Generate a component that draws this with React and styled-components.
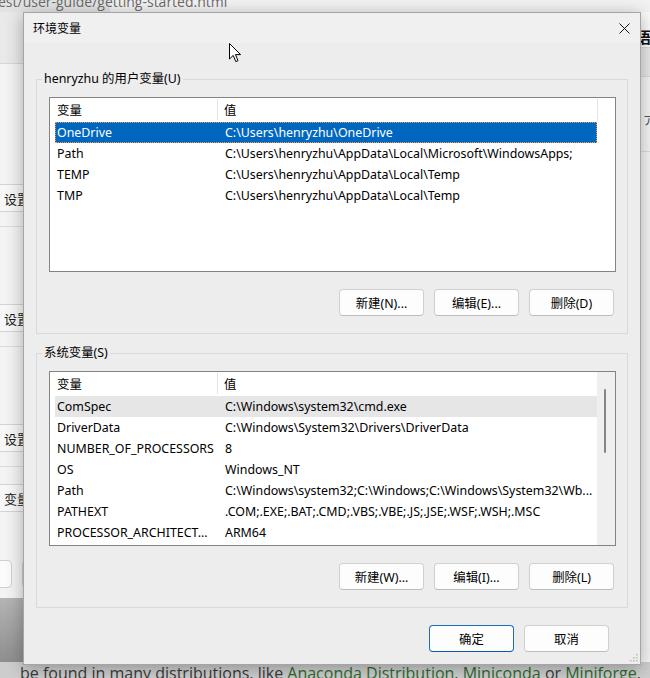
import React from 'react';
import styled, { createGlobalStyle } from 'styled-components';

const GlobalStyle = createGlobalStyle`
  html, body {
    margin: 0;
    padding: 0;
  }
  body {
    width: 650px;
    height: 678px;
    overflow: hidden;
    background: #f3f3f3;
    font-family: "Noto Sans", "Noto Sans CJK SC", sans-serif;
  }
`;

const Desktop = styled.div`
  position: relative;
  width: 650px;
  height: 678px;
  overflow: hidden;
`;

/* ---------- background windows ---------- */

const BrowserPage = styled.div`
  position: absolute;
  inset: 0;
  display: flex;
  flex-direction: column;
  background: #f4f4f4;
`;

const UrlStrip = styled.div`
  height: 12px;
  overflow: hidden;
  background: linear-gradient(to right, #e3e3e3 110px, #f2f2f2 110px);
  font-family: "Open Sans", sans-serif;
  font-size: 14px;
  line-height: 14px;
  color: #6a6a6a;
  white-space: nowrap;
`;

const UrlText = styled.div`
  margin-top: -5px;
  margin-left: -2px;
`;

const PageBody = styled.div`
  flex: 1;
`;

const PageFooter = styled.div`
  height: 16px;
  overflow: hidden;
  padding-left: 20px;
  background: #cdcdcd;
  font-family: "Open Sans", sans-serif;
  font-size: 16px;
  line-height: 22px;
  color: #3a3a3a;
  white-space: nowrap;
`;

const PageLink = styled.span`
  color: #2d6b2d;
`;

const SettingsWindow = styled.div`
  position: absolute;
  left: 0;
  top: 12px;
  width: 110px;
  height: 586px;
  background: #f3f3f3;
  display: flex;
  flex-direction: column;
  font-size: 13px;
  color: #1a1a1a;
`;

const SettingsTop = styled.div`
  height: 51px;
  flex: none;
  background: #e9e9e9;
  border-bottom: 1px solid #d6d6d6;
`;

const SettingsCard = styled.div`
  flex: none;
  height: 26px;
  margin-top: ${(p) => p.$gap}px;
  display: flex;
  align-items: center;
  padding-left: 4px;
  background: #f7f7f7;
  border-top: 1px solid #d4d4d4;
  border-bottom: 1px solid #d4d4d4;
`;

const SettingsRule = styled.div`
  flex: none;
  height: 0;
  margin-top: 14px;
  border-top: 1px solid #dcdcdc;
`;

const SettingsButtons = styled.div`
  flex: none;
  margin-top: ${(p) => p.$gap}px;
  display: flex;
  gap: 10px;
  margin-left: -60px;
`;

const SettingsButton = styled.div`
  width: 70px;
  height: 26px;
  border: 1px solid #cfcfcf;
  border-radius: 4px;
  background: #fbfbfb;
`;

const ShadowZone = styled.div`
  position: absolute;
  left: 0;
  top: 598px;
  width: 30px;
  height: 64px;
  background: linear-gradient(to bottom, #b4b4b4, #8e8e8e);
`;

const RightPane = styled.div`
  position: absolute;
  left: 630px;
  top: 12px;
  width: 40px;
  height: 640px;
  display: flex;
  flex-direction: column;
  background: #f4f4f4;
`;

const RightHead = styled.div`
  height: 35px;
  flex: none;
  background: #fafafa;
  border-bottom: 1px solid #d8d8d8;
  font-size: 15px;
  font-weight: 700;
  line-height: 50px;
  padding-left: 6px;
  color: #111;
  overflow: hidden;
`;

const RightBand = styled.div`
  height: 28px;
  flex: none;
  background: #e7e7e7;
  border-bottom: 1px solid #dadada;
`;

const RightRow = styled.div`
  height: 75px;
  flex: none;
  border-bottom: 1px solid #dcdcdc;
  font-size: 12px;
  color: #555;
  padding: 34px 0 0 13px;
  box-sizing: border-box;
`;

/* ---------- dialog ---------- */

const Dialog = styled.div`
  position: absolute;
  left: 23px;
  top: 12px;
  width: 618px;
  height: 653px;
  box-sizing: border-box;
  border: 1px solid #a5a5a5;
  background: #ededed;
  box-shadow: 0 3px 16px rgba(0, 0, 0, 0.3);
  display: flex;
  flex-direction: column;
  font-size: 12px;
  color: #000;
`;

const TitleBar = styled.div`
  height: 30px;
  flex: none;
  display: flex;
  align-items: center;
  justify-content: space-between;
  padding: 0 10px 0 9px;
  background: #f0f0f0;
`;

const DialogBody = styled.div`
  flex: 1;
  display: flex;
  flex-direction: column;
  padding: 28px 12px 0 12px;
`;

const Group = styled.fieldset`
  margin: ${(p) => (p.$first ? '0' : '11px 0 0 0')};
  padding: 0;
  min-width: 0;
  border: 1px solid #d9d9d9;
`;

const Legend = styled.legend`
  margin-left: 5px;
  padding: 0 2px;
  font-size: 12.4px;
  line-height: 16px;
`;

const GroupInner = styled.div`
  padding: 10px 11px 17px 12px;
`;

const ListBox = styled.div`
  height: 175px;
  box-sizing: border-box;
  border: 1px solid #838383;
  background: #fff;
  display: flex;
  font-size: 12.4px;
`;

const ListMain = styled.div`
  flex: 1;
  min-width: 0;
`;

const HeaderRow = styled.div`
  height: 24px;
  display: grid;
  grid-template-columns: 168px 1fr;
`;

const HeadCell = styled.div`
  display: flex;
  align-items: center;
  padding-left: ${(p) => (p.$first ? 7 : 6)}px;
  margin: 1px 0 2px;
  border-right: ${(p) => (p.$first ? '1px solid #e3e3e3' : 'none')};
`;

const Row = styled.div`
  height: 21px;
  margin-left: 5px;
  box-sizing: border-box;
  display: grid;
  grid-template-columns: 163px 1fr;
  align-items: center;
  white-space: nowrap;
  background: ${(p) => (p.$selected ? '#0067c0' : p.$hover ? '#e6e6e6' : 'transparent')};
  color: ${(p) => (p.$selected ? '#fff' : '#000')};
  outline: ${(p) => (p.$selected ? '1px dotted #f0a04a' : 'none')};
  outline-offset: -1px;
`;

const Cell = styled.div`
  padding-left: ${(p) => (p.$first ? 2 : 7)}px;
  overflow: hidden;
`;

const SideCol = styled.div`
  width: 18px;
  flex: none;
  box-sizing: border-box;
  background: ${(p) => (p.$scroll ? '#efefef' : '#fff')};
  padding: ${(p) => (p.$scroll ? '17px 0 0 7px' : '0')};
`;

const SideHead = styled.div`
  height: 22px;
  margin-top: 1px;
  border-left: 1px solid #e3e3e3;
`;

const Thumb = styled.div`
  width: 2px;
  height: 64px;
  border-radius: 1px;
  background: #858585;
`;

const ButtonRow = styled.div`
  display: flex;
  justify-content: flex-end;
  gap: 10px;
  margin-top: 17px;
  padding-right: ${(p) => p.$right || 2}px;
`;

const Button = styled.button`
  width: 85px;
  height: 27px;
  box-sizing: border-box;
  border: 1px solid ${(p) => (p.$primary ? '#1a6dc0' : '#d0d0d0')};
  border-bottom-color: ${(p) => (p.$primary ? '#0a5aa8' : '#bdbdbd')};
  border-radius: 4px;
  background: #fdfdfd;
  font-family: "Noto Sans", "Noto Sans CJK SC", sans-serif;
  font-size: 12.4px;
  color: #000;
  padding: 0;
`;

const FooterRow = styled(ButtonRow)`
  margin-top: 17px;
`;

const Grip = styled.svg`
  position: absolute;
  right: 2px;
  bottom: 2px;
`;

const Cursor = styled.svg`
  position: absolute;
  left: 229px;
  top: 43px;
`;

const userVars = [
  ['OneDrive', 'C:\\Users\\henryzhu\\OneDrive'],
  ['Path', 'C:\\Users\\henryzhu\\AppData\\Local\\Microsoft\\WindowsApps;'],
  ['TEMP', 'C:\\Users\\henryzhu\\AppData\\Local\\Temp'],
  ['TMP', 'C:\\Users\\henryzhu\\AppData\\Local\\Temp'],
];

const systemVars = [
  ['ComSpec', 'C:\\Windows\\system32\\cmd.exe'],
  ['DriverData', 'C:\\Windows\\System32\\Drivers\\DriverData'],
  ['NUMBER_OF_PROCESSORS', '8'],
  ['OS', 'Windows_NT'],
  ['Path', 'C:\\Windows\\system32;C:\\Windows;C:\\Windows\\System32\\Wb...'],
  ['PATHEXT', '.COM;.EXE;.BAT;.CMD;.VBS;.VBE;.JS;.JSE;.WSF;.WSH;.MSC'],
  ['PROCESSOR_ARCHITECT...', 'ARM64'],
];

const VarList = ({ rows, scroll, selected, hover }) => (
  <ListBox>
    <ListMain>
      <HeaderRow>
        <HeadCell $first>变量</HeadCell>
        <HeadCell>值</HeadCell>
      </HeaderRow>
      {rows.map(([name, value], i) => (
        <Row key={name + i} $selected={i === selected} $hover={i === hover}>
          <Cell $first>{name}</Cell>
          <Cell>{value}</Cell>
        </Row>
      ))}
    </ListMain>
    <SideCol $scroll={scroll}>{scroll ? <Thumb /> : <SideHead />}</SideCol>
  </ListBox>
);

const App = () => (
  <Desktop>
    <GlobalStyle />
    <BrowserPage>
      <UrlStrip>
        <UrlText>est/user-guide/getting-started.html</UrlText>
      </UrlStrip>
      <PageBody />
      <PageFooter>
        be found in many distributions, like <PageLink>Anaconda Distribution</PageLink>,{' '}
        <PageLink>Miniconda</PageLink> or <PageLink>Miniforge</PageLink>.
      </PageFooter>
    </BrowserPage>

    <SettingsWindow>
      <SettingsTop />
      <SettingsCard $gap={120}>设置</SettingsCard>
      <SettingsRule />
      <SettingsCard $gap={77}>设置</SettingsCard>
      <SettingsRule />
      <SettingsCard $gap={77}>设置</SettingsCard>
      <SettingsRule />
      <SettingsCard $gap={17}>变量(</SettingsCard>
      <SettingsButtons $gap={48}>
        <SettingsButton />
        <SettingsButton />
      </SettingsButtons>
    </SettingsWindow>
    <ShadowZone />

    <RightPane>
      <RightHead>语</RightHead>
      <RightBand />
      <RightRow>ア</RightRow>
    </RightPane>

    <Dialog>
      <TitleBar>
        <span>环境变量</span>
        <svg width="11" height="11" viewBox="0 0 11 11">
          <path d="M0.5 0.5 L10.5 10.5 M10.5 0.5 L0.5 10.5" stroke="#111" strokeWidth="1" fill="none" />
        </svg>
      </TitleBar>
      <DialogBody>
        <Group $first>
          <Legend>henryzhu 的用户变量(U)</Legend>
          <GroupInner>
            <VarList rows={userVars} selected={0} />
            <ButtonRow>
              <Button>新建(N)...</Button>
              <Button>编辑(E)...</Button>
              <Button>删除(D)</Button>
            </ButtonRow>
          </GroupInner>
        </Group>
        <Group>
          <Legend>系统变量(S)</Legend>
          <GroupInner>
            <VarList rows={systemVars} scroll hover={0} />
            <ButtonRow>
              <Button>新建(W)...</Button>
              <Button>编辑(I)...</Button>
              <Button>删除(L)</Button>
            </ButtonRow>
          </GroupInner>
        </Group>
        <FooterRow $right={19}>
          <Button $primary>确定</Button>
          <Button>取消</Button>
        </FooterRow>
      </DialogBody>
      <Grip width="8" height="8" viewBox="0 0 8 8">
        <rect x="6" y="0" width="1.5" height="1.5" fill="#bbb" />
        <rect x="3" y="3" width="1.5" height="1.5" fill="#bbb" />
        <rect x="6" y="3" width="1.5" height="1.5" fill="#bbb" />
        <rect x="0" y="6" width="1.5" height="1.5" fill="#bbb" />
        <rect x="3" y="6" width="1.5" height="1.5" fill="#bbb" />
        <rect x="6" y="6" width="1.5" height="1.5" fill="#bbb" />
      </Grip>
    </Dialog>

    <Cursor width="13" height="20" viewBox="0 0 13 20">
      <path
        d="M0.5 0.5 L0.5 16 L4.2 12.4 L6.8 18.6 L9 17.7 L6.5 11.6 L11.6 11.6 Z"
        fill="#fff"
        stroke="#000"
        strokeWidth="1"
        strokeLinejoin="round"
      />
    </Cursor>
  </Desktop>
);

export default App;
